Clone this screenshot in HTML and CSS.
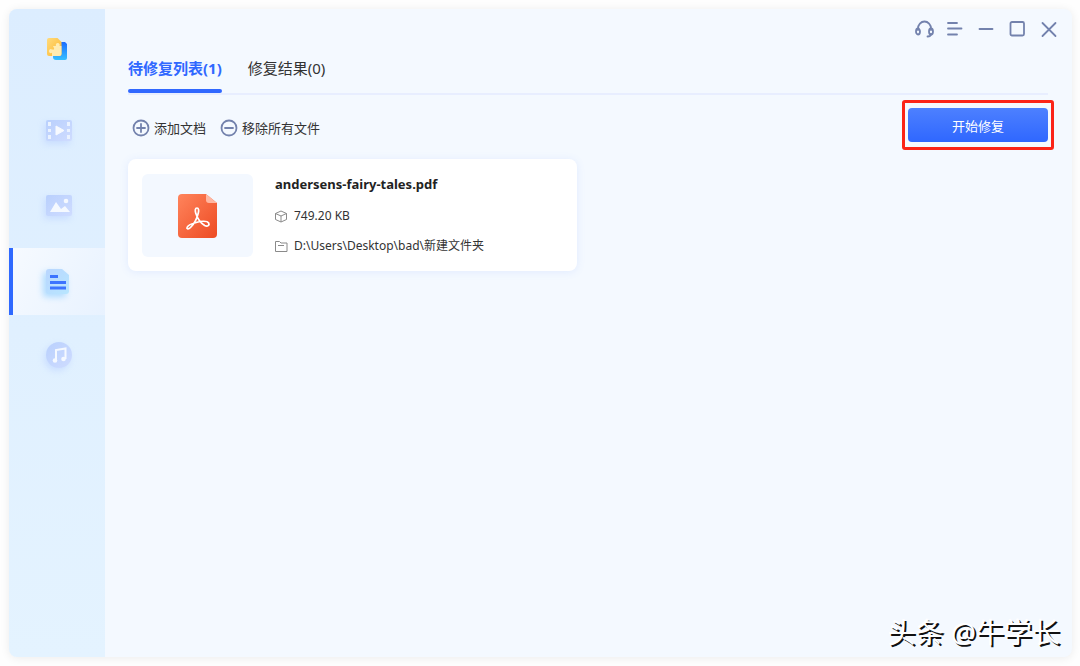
FILE: index.html
```html
<!DOCTYPE html>
<html lang="zh-CN">
<head>
    <meta charset="UTF-8">
    <meta name="viewport" content="width=device-width, initial-scale=1.0">
    <title>文档修复</title>
    <link rel="stylesheet" href="styles.css">
</head>
<body>

    <!-- App window -->
    <div class="window">

        <!-- Sidebar -->
        <nav class="sidebar">
            <div class="logo">
                <svg width="24" height="26" viewBox="0 0 24 26">
                    <defs>
                        <linearGradient id="logoBlue" x1="0" y1="0" x2="0" y2="1">
                            <stop offset="0" stop-color="#1c6cff"/>
                            <stop offset="1" stop-color="#35c0ff"/>
                        </linearGradient>
                        <linearGradient id="logoGold" x1="0" y1="0" x2="1" y2="1">
                            <stop offset="0" stop-color="#ffdb7d"/>
                            <stop offset="1" stop-color="#fdb62c"/>
                        </linearGradient>
                    </defs>
                    <path d="M9 5h11l2 2v14a2 2 0 0 1-2 2H11a3 3 0 0 1-3-3z" fill="url(#logoBlue)"/>
                    <path d="M4 1h8.500l4 4v12a2 2 0 0 1-2 2H4a2 2 0 0 1-2-2V3a2 2 0 0 1 2-2z" fill="url(#logoGold)"/>
                    <path d="M8 9h3a2 2 0 1 1 3.500 0h2v8a2 2 0 0 1-2 2H7v-3.200a2 2 0 1 1 0-3.300h2c.5-1.500-.5-2-1-3.500z" fill="#fff0bd" opacity=".9"/>
                </svg>
            </div>
            <button class="nav-item" aria-label="视频修复">
                <svg width="26" height="22" viewBox="0 0 26 22">
                    <defs>
                        <linearGradient id="mute" x1="0" y1="0" x2="1" y2="1">
                            <stop offset="0" stop-color="#b9d0fd"/>
                            <stop offset="1" stop-color="#cfdcff"/>
                        </linearGradient>
                    </defs>
                    <rect width="26" height="21" rx="2" fill="url(#mute)"/>
                    <path d="M2 2h3v4H2zM2 9h3v3H2zM2 15h3v4H2zM21 2h3v4h-3zM21 9h3v3h-3zM21 15h3v4h-3z" fill="#eaf2ff"/>
                    <path d="M10 6l8 4.500-8 4.500z" fill="#f7faff" stroke="#f7faff" stroke-linejoin="round"/>
                </svg>
            </button>
            <button class="nav-item" aria-label="图片修复">
                <svg width="26" height="22" viewBox="0 0 26 22">
                    <rect width="26" height="21" rx="2" fill="url(#mute)"/>
                    <path d="M4 17l6-10 5 7 4-3 5 6z" fill="#f5f9ff"/>
                    <circle cx="20" cy="6" r="2.300" fill="#f5f9ff"/>
                </svg>
            </button>
            <button class="nav-item active" aria-label="文档修复">
                <svg width="26" height="26" viewBox="0 0 26 26">
                    <defs>
                        <linearGradient id="doc" x1="0" y1="0" x2="1" y2="1">
                            <stop offset="0" stop-color="#b9d6ff"/>
                            <stop offset="1" stop-color="#b8e6ff"/>
                        </linearGradient>
                    </defs>
                    <path d="M4 0h13l7 6v16a3 3 0 0 1-3 3H4a3 3 0 0 1-3-3V3a3 3 0 0 1 3-3z" fill="url(#doc)"/>
                    <path d="M5 6h8v3H5zM5 12h16v3H5zM5 17.500h16v3H5z" fill="#3c74ff"/>
                </svg>
            </button>
            <button class="nav-item" aria-label="音频修复">
                <svg width="27" height="27" viewBox="0 0 27 27">
                    <circle cx="13" cy="13" r="13" fill="url(#mute)"/>
                    <path d="M10 19V8l9.500-1.500V17" fill="none" stroke="#f5f9ff" stroke-width="2"/>
                    <circle cx="9" cy="18.500" r="2.300" fill="#f5f9ff"/>
                    <circle cx="17.500" cy="17" r="2.300" fill="#f5f9ff"/>
                </svg>
            </button>
        </nav>

        <!-- Main content -->
        <main class="main">
            <div class="titlebar">
                <button class="win-btn" aria-label="客服">
                    <svg width="20" height="20" viewBox="0 0 20 20">
                        <path d="M3 11V9.500a6.500 7 0 0 1 13 0V11M16 15q0 2.500-3.500 2.500"/>
                        <ellipse cx="3" cy="12.500" rx="2" ry="3"/>
                        <ellipse cx="16" cy="12.500" rx="2" ry="3"/>
                    </svg>
                </button>
                <button class="win-btn" aria-label="菜单">
                    <svg width="20" height="20" viewBox="0 0 20 20"><path d="M2 4h9M2 9.500h13.500M2 15.500h9"/></svg>
                </button>
                <button class="win-btn" aria-label="最小化">
                    <svg width="20" height="20" viewBox="0 0 20 20"><path d="M2.500 10h13"/></svg>
                </button>
                <button class="win-btn" aria-label="最大化">
                    <svg width="20" height="20" viewBox="0 0 20 20"><rect x="2.500" y="3" width="13.500" height="13.500" rx="1.500"/></svg>
                </button>
                <button class="win-btn" aria-label="关闭">
                    <svg width="20" height="20" viewBox="0 0 20 20"><path d="M3.500 4l13 13M16.500 4l-13 13"/></svg>
                </button>
            </div>

            <div class="content">
                <div class="tabs">
                    <button class="tab active">待修复列表(1)</button>
                    <button class="tab">修复结果(0)</button>
                </div>

                <div class="toolbar">
                    <button class="tool">
                        <svg width="18" height="18" viewBox="0 0 18 18"><circle cx="9" cy="9" r="7.500"/><path d="M5 9h8M9 5v8"/></svg>
                        添加文档
                    </button>
                    <button class="tool">
                        <svg width="18" height="18" viewBox="0 0 18 18"><circle cx="9" cy="9" r="7.500"/><path d="M5 9h8"/></svg>
                        移除所有文件
                    </button>
                    <div class="start">
                        <button class="start-btn">开始修复</button>
                    </div>
                </div>

                <!-- File list -->
                <div class="file-card">
                    <div class="thumb">
                        <svg width="40" height="44" viewBox="0 0 40 44">
                            <defs>
                                <linearGradient id="pdf" x1="0" y1="0" x2="1" y2="1">
                                    <stop offset="0" stop-color="#ff845c"/>
                                    <stop offset="1" stop-color="#ed4b23"/>
                                </linearGradient>
                            </defs>
                            <path d="M4 0h24l11 9v31a4 4 0 0 1-4 4H4a4 4 0 0 1-4-4V4a4 4 0 0 1 4-4z" fill="url(#pdf)"/>
                            <path d="M28 0l11 9h-8a3 3 0 0 1-3-3z" fill="#ffb7a2"/>
                            <path d="M19 14c-2 0-2 2.500-1.300 5 1.500 5 5 10 9 12.500 3 1.500 5-.5 4-2.500-1.500-2.500-8-2-12.500-.5-4 1-8.500 3-9.200 5-.6 1.500 1.500 2 3.500 0 3.500-3.500 6.500-9 7.800-14.500.6-2.500.5-5-1.300-5z" fill="none" stroke="#fff" stroke-width="1.700" stroke-linejoin="round"/>
                        </svg>
                    </div>
                    <div class="file-info">
                        <h2>andersens-fairy-tales.pdf</h2>
                        <p>
                            <svg width="13" height="13" viewBox="0 0 13 13"><path d="M6 1l5.500 2.500v6L6 12 .5 9.500v-6zM.5 3.500L6 6l5.500-2.500M6 6v6"/></svg>
                            749.20 KB
                        </p>
                        <p>
                            <svg width="13" height="13" viewBox="0 0 13 13"><path d="M.5 11.500v-10h4L6 3h6v8.500zM3 5.500h6"/></svg>
                            D:\Users\Desktop\bad\新建文件夹
                        </p>
                    </div>
                </div>
            </div>
        </main>
    </div>

    <div class="watermark">头条 @牛学长</div>

</body>
</html>
```
FILE: styles.css
```css
/* General styling */
* {
    margin: 0;
    padding: 0;
    box-sizing: border-box;
    font-family: "Noto Sans", "Noto Sans CJK SC", sans-serif;
}

body {
    min-height: 100vh;
    padding: 9px 8px 9px 9px;
    display: flex;
    background-color: #fefefe;
    color: #333;
}

button {
    border: none;
    background: none;
    cursor: pointer;
}

svg {
    display: block;
    flex-shrink: 0;
    overflow: visible;
}

.window {
    flex: 1;
    display: flex;
    border-radius: 8px;
    overflow: hidden;
    background-color: #f4f9ff;
    box-shadow: 0 1px 10px rgba(0, 0, 0, 0.08);
}

/* Sidebar */
.sidebar {
    width: 96px;
    display: flex;
    flex-direction: column;
    gap: 8px;
    background: linear-gradient(#dcedff, #e4f3ff);
}

.logo {
    height: 81px;
    display: flex;
    align-items: center;
    justify-content: center;
}

.nav-item {
    height: 67px;
    padding: 0 0 2px 4px;
    display: flex;
    align-items: center;
    justify-content: center;
}

.nav-item svg {
    filter: drop-shadow(-2px 3px 3px rgba(140, 170, 255, 0.25));
}

.nav-item.active {
    padding: 0 2px 0 0;
    border-left: 4px solid #2f69ff;
    background: linear-gradient(120deg, #f6faff, #e8f2ff);
}

.nav-item.active svg {
    filter: drop-shadow(-3px 3px 3px rgba(80, 180, 255, 0.4));
}

/* Main area */
.main {
    flex: 1;
    min-width: 0;
}

.titlebar {
    height: 40px;
    padding-right: 13px;
    display: flex;
    align-items: center;
    justify-content: flex-end;
    gap: 11px;
}

.win-btn svg,
.tool svg {
    fill: none;
    stroke: #7382ad;
    stroke-width: 1.8;
    stroke-linecap: round;
}

.content {
    padding: 0 24px 0 23px;
}

/* Tabs */
.tabs {
    display: flex;
    gap: 26px;
    border-bottom: 2px solid #e8eeff;
}

.tab {
    position: relative;
    height: 44px;
    padding-bottom: 6px;
    font-size: 15px;
    line-height: 22px;
    color: #333;
}

.tab.active {
    font-weight: bold;
    color: #3068ff;
}

.tab.active::after {
    content: '';
    position: absolute;
    left: 0;
    right: 0;
    bottom: 0;
    height: 4px;
    border-radius: 2px;
    background-color: #3068ff;
}

/* Toolbar */
.toolbar {
    padding: 13px 0 17px 4px;
    display: flex;
    align-items: center;
    gap: 14px;
}

.tool {
    padding-top: 6px;
    display: flex;
    align-items: center;
    gap: 4px;
    font-size: 13px;
    line-height: 20px;
    color: #333;
}

.start {
    position: relative;
    margin-left: auto;
}

/* Red frame around the start button */
.start::after {
    content: '';
    position: absolute;
    inset: -8px -6px;
    border: 3px solid #fb2418;
    border-radius: 3px;
    pointer-events: none;
}

.start-btn {
    display: block;
    width: 140px;
    height: 34px;
    border-radius: 4px;
    background: linear-gradient(#4d80ff, #2f67ff);
    color: #fff;
    font-size: 13px;
}

/* File card */
.file-card {
    max-width: 449px;
    padding: 15px 14px 14px;
    display: flex;
    gap: 22px;
    border-radius: 8px;
    background-color: #fff;
    box-shadow: 0 1px 8px rgba(90, 130, 255, 0.12);
}

.thumb {
    width: 111px;
    height: 83px;
    display: flex;
    align-items: center;
    justify-content: center;
    border-radius: 6px;
    background-color: #f3f8ff;
}

.file-info h2 {
    margin-bottom: 12px;
    font-size: 13px;
    line-height: 20px;
    color: #222;
}

.file-info p {
    margin-bottom: 10px;
    display: flex;
    align-items: center;
    gap: 6px;
    font-size: 12px;
    line-height: 20px;
}

.file-info p:last-child {
    margin-bottom: 0;
}

.file-info svg {
    fill: none;
    stroke: #8a8a8a;
    stroke-linejoin: round;
}

.watermark {
    position: absolute;
    right: 20px;
    bottom: 14px;
    font-size: 28px;
    line-height: 40px;
    color: #fff;
    text-shadow: 2px 2px 0 #111;
}
```
